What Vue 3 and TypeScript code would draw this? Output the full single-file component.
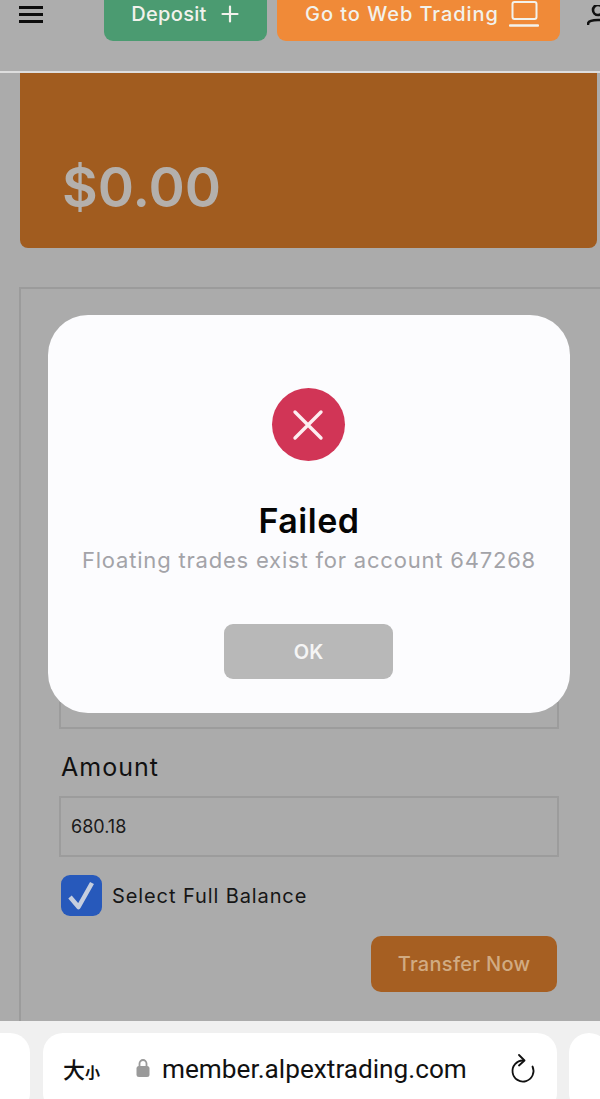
<template>
  <div class="page">
    <header class="topbar">
      <button class="menu" aria-label="Menu">
        <span></span><span></span><span></span>
      </button>
      <div class="actions">
        <button class="btn deposit">
          Deposit
          <svg width="20" height="20" viewBox="0 0 20 20" fill="none" stroke="currentColor" stroke-width="2.2" stroke-linecap="round">
            <path d="M10 2.5v15M2.5 10h15" />
          </svg>
        </button>
        <button class="btn web">
          Go to Web Trading
          <svg width="30" height="26" viewBox="0 0 30 26" fill="none" stroke="currentColor" stroke-width="2">
            <rect x="3.5" y="1" width="24" height="17" rx="2" />
            <path d="M1 24.500h28" stroke-width="2.4" stroke-linecap="round" />
          </svg>
        </button>
      </div>
      <svg class="user" width="20" height="26" viewBox="0 0 20 26" fill="none" stroke="#111" stroke-width="2.6">
        <circle cx="11" cy="5" r="5" />
        <path d="M1 20v-1c0-3 4-4 10-4s9 1 9 2" />
      </svg>
    </header>

    <section class="balance">
      <div class="amount">$0.00</div>
    </section>

    <section class="panel">
      <div class="field hidden-field"></div>
      <label class="field-label">Amount</label>
      <div class="field">680.18</div>
      <div class="check-row">
        <span class="check">
          <svg width="41" height="41" viewBox="0 0 41 41" fill="none">
            <path d="M9 22l8.500 10L31 8" stroke="#c6cede" stroke-width="4.500" stroke-linejoin="round" />
          </svg>
        </span>
        <span class="check-label">Select Full Balance</span>
      </div>
      <div class="submit-row">
        <button class="transfer">Transfer Now</button>
      </div>
    </section>

    <div class="modal">
      <div class="modal-icon">
        <svg width="32" height="32" viewBox="0 0 32 32" fill="none" stroke="#fdeef1" stroke-width="3.4" stroke-linecap="round">
          <path d="M3 3l26 26M29 3L3 29" />
        </svg>
      </div>
      <h2 class="modal-title">{{ title }}</h2>
      <p class="modal-text">{{ message }}</p>
      <button class="ok">OK</button>
    </div>

    <footer class="browser">
      <div class="tab side-left"></div>
      <div class="tab address">
        <span class="text-size">大<small>小</small></span>
        <svg class="lock" width="14" height="20" viewBox="0 0 14 20">
          <path d="M3.500 9V5.500a3.500 3.500 0 0 1 7 0V9" fill="none" stroke="#9a9a9a" stroke-width="1.800" />
          <rect x="0.500" y="8" width="13" height="11" rx="2.500" fill="#9a9a9a" />
        </svg>
        <span class="url">member.alpextrading.com</span>
        <svg class="reload" width="26" height="30" viewBox="0 0 26 30" fill="none" stroke="#111" stroke-width="1.800" stroke-linecap="round" stroke-linejoin="round">
          <path d="M13 6.500A10.500 10.500 0 1 0 22.500 12.500" />
          <path d="M9 1l5.500 5.500-5.500 5" />
        </svg>
      </div>
      <div class="tab side-right"></div>
    </footer>
  </div>
</template>

<script setup lang="ts">
const title = "Failed";
const message = "Floating trades exist for account 647268";
</script>

<style>
html,
body {
  margin: 0;
  background: #ababab;
}
</style>

<style scoped>
.page {
  position: relative;
  width: 600px;
  height: 1099px;
  overflow: hidden;
  display: flex;
  flex-direction: column;
  background: #ababab;
  font-family: Inter, "Liberation Sans", sans-serif;
  color: #111;
}
button {
  font-family: inherit;
  border: none;
  padding: 0;
}

.topbar {
  flex: none;
  height: 71px;
  display: flex;
  align-items: flex-start;
  border-bottom: 2px solid #dedede;
  background: #adadad;
}
.menu {
  flex: none;
  width: 24px;
  margin: 6px 0 0 19px;
  display: flex;
  flex-direction: column;
  gap: 4px;
  background: none;
}
.menu span {
  height: 3px;
  background: #0d0d0d;
}
.actions {
  flex: none;
  display: flex;
  gap: 10px;
  margin: -14px 0 0 61px;
}
.btn {
  height: 55px;
  border-radius: 9px;
  display: flex;
  align-items: center;
  justify-content: center;
  box-sizing: border-box;
  color: #f2f2ec;
  font-size: 20px;
  font-weight: 500;
  letter-spacing: 0.6px;
}
.deposit {
  width: 163px;
  gap: 13px;
  background: #4b9b71;
  letter-spacing: 0.3px;
}
.web {
  width: 283px;
  gap: 10px;
  padding-left: 7px;
  background: #f08a38;
  letter-spacing: 0.95px;
}
.user {
  margin: 5px 0 0 27px;
  flex: none;
}

.balance {
  flex: none;
  height: 175px;
  margin-left: 20px;
  width: 577px;
  box-sizing: border-box;
  padding: 79px 0 0 42px;
  background: #a15c1f;
  border-radius: 0 0 8px 8px;
}
.amount {
  font-size: 55px;
  line-height: 70px;
  font-weight: 600;
  color: #b4b0ac;
}

.panel {
  flex: none;
  height: 760px;
  margin: 39px 0 0 19px;
  width: 600px;
  box-sizing: border-box;
  border: 2px solid #9b9b9b;
  padding: 379px 0 0 38px;
}
.field {
  width: 500px;
  height: 61px;
  box-sizing: border-box;
  border: 2px solid #9c9c9c;
  display: flex;
  align-items: center;
  padding-left: 10px;
  font-size: 18px;
  color: #1a1a1a;
}
.hidden-field {
  height: 61px;
}
.field-label {
  display: block;
  margin: 23px 0 14px 2px;
  font-size: 25px;
  line-height: 30px;
  letter-spacing: 1px;
}
.check-row {
  display: flex;
  align-items: center;
  gap: 10px;
  margin: 18px 0 0 2px;
}
.check {
  width: 41px;
  height: 41px;
  border-radius: 9px;
  background: #2759bb;
  display: block;
}
.check svg {
  display: block;
}
.check-label {
  font-size: 20px;
  letter-spacing: 0.9px;
  color: #161616;
}
.submit-row {
  width: 498px;
  display: flex;
  justify-content: flex-end;
  margin-top: 20px;
}
.transfer {
  width: 186px;
  height: 56px;
  border-radius: 10px;
  background: #a65f22;
  color: #d1ab82;
  font-size: 20px;
  font-weight: 500;
  letter-spacing: 0.3px;
}

.modal {
  position: absolute;
  left: 48px;
  top: 315px;
  width: 522px;
  height: 398px;
  box-sizing: border-box;
  padding-top: 73px;
  border-radius: 40px;
  background: #fcfcfe;
  display: flex;
  flex-direction: column;
  align-items: center;
}
.modal-icon {
  width: 73px;
  height: 73px;
  margin-left: -2px;
  border-radius: 50%;
  background: #d13556;
  display: flex;
  align-items: center;
  justify-content: center;
}
.modal-title {
  margin: 37px 0 0;
  font-size: 34px;
  line-height: 46px;
  font-weight: 600;
  letter-spacing: 0.5px;
  color: #050505;
}
.modal-text {
  margin: 0;
  font-size: 22px;
  line-height: 32px;
  letter-spacing: 0.8px;
  color: #a3a3a8;
  white-space: nowrap;
}
.ok {
  margin-top: 48px;
  margin-left: -1px;
  width: 169px;
  height: 55px;
  border-radius: 9px;
  background: #b8b8b8;
  color: #f5f5f5;
  font-size: 20px;
  font-weight: 600;
}

.browser {
  position: absolute;
  left: 0;
  right: 0;
  bottom: 0;
  height: 78px;
  display: flex;
  gap: 13px;
  padding-top: 12px;
  box-sizing: border-box;
  background: #f0f0f0;
}
.tab {
  height: 80px;
  border-radius: 20px;
  background: #fff;
  flex: none;
}
.side-left {
  width: 30px;
  border-radius: 0 20px 20px 0;
}
.side-right {
  width: 40px;
  margin-left: -1px;
}
.address {
  width: 514px;
  height: 80px;
  display: flex;
  align-items: flex-start;
  box-sizing: border-box;
  padding: 21px 0 0 20px;
}
.text-size {
  flex: none;
  width: 38px;
  white-space: nowrap;
  font-family: "Noto Sans CJK SC", sans-serif;
  font-size: 22px;
  line-height: 28px;
  font-weight: 500;
  color: #111;
}
.text-size small {
  font-size: 15px;
  font-weight: 700;
}
.lock {
  margin: 4px 0 0 35px;
  flex: none;
}
.url {
  margin-left: 12px;
  font-family: Roboto, "Liberation Sans", sans-serif;
  font-size: 26.2px;
  line-height: 30px;
  color: #111;
  white-space: nowrap;
}
.reload {
  margin-left: auto;
  margin-right: 21px;
  flex: none;
}
</style>
